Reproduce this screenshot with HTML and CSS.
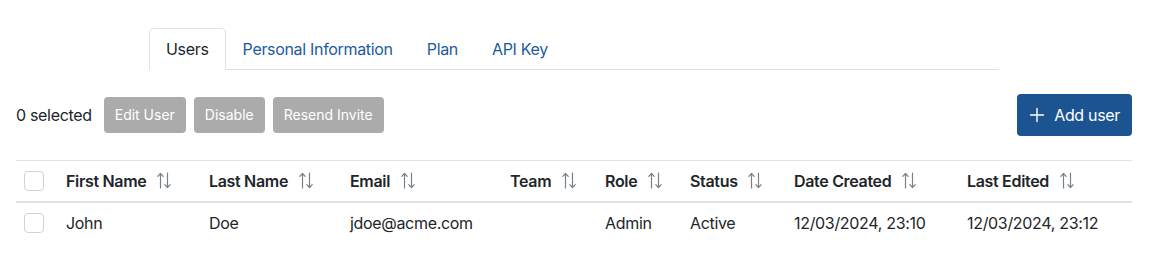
FILE: index.html
```html
<!DOCTYPE html>
<html lang="en">
<head>
  <meta charset="UTF-8">
  <meta name="viewport" content="width=device-width, initial-scale=1">
  <title>Users</title>
  <link rel="stylesheet" href="styles.css">
</head>
<body>
  <div class="page">
    <!-- Account tabs -->
    <ul class="tabs">
      <li class="tab active"><a href="#">Users</a></li>
      <li class="tab"><a href="#">Personal Information</a></li>
      <li class="tab"><a href="#">Plan</a></li>
      <li class="tab"><a href="#">API Key</a></li>
    </ul>

    <!-- Bulk actions -->
    <div class="toolbar">
      <div class="bulk">
        <span class="selected-count">0 selected</span>
        <button class="bulk-btn" disabled>Edit User</button>
        <button class="bulk-btn" disabled>Disable</button>
        <button class="bulk-btn" disabled>Resend Invite</button>
      </div>
      <button class="add-btn">
        <svg class="plus" width="16" height="16" viewBox="0 0 16 16" fill="none" stroke="currentColor" stroke-width="1.4" stroke-linecap="round">
          <path d="M8 1.5v13M1.5 8h13"/>
        </svg>
        Add user
      </button>
    </div>

    <table class="user-table">
      <colgroup>
        <col style="width:42px">
        <col style="width:143px">
        <col style="width:141px">
        <col style="width:160px">
        <col style="width:95px">
        <col style="width:85px">
        <col style="width:104px">
        <col style="width:173px">
        <col style="width:173px">
      </colgroup>
      <thead>
        <tr>
          <th><span class="check"></span></th>
          <th>First Name <span class="sort"></span></th>
          <th>Last Name <span class="sort"></span></th>
          <th>Email <span class="sort"></span></th>
          <th>Team <span class="sort"></span></th>
          <th>Role <span class="sort"></span></th>
          <th>Status <span class="sort"></span></th>
          <th>Date Created <span class="sort"></span></th>
          <th>Last Edited <span class="sort"></span></th>
        </tr>
      </thead>
      <tbody id="rows"></tbody>
    </table>
  </div>

  <script>
    // Sort icon: up arrow on the left, down arrow on the right.
    const sortIcon = '<svg width="16" height="17" viewBox="0 0 16 17" fill="none" stroke="currentColor" stroke-width="1.2" stroke-linecap="round" stroke-linejoin="round">' +
      '<path d="M4.5 16V1.5M1.8 4.3L4.5 1.5l2.7 2.8"/>' +
      '<path d="M11.5 1v14.5M8.8 12.7l2.7 2.8 2.7-2.8"/></svg>';
    document.querySelectorAll('.sort').forEach(function(el) {
      el.innerHTML = sortIcon;
    });

    const users = [
      { first: 'John', last: 'Doe', email: 'jdoe@acme.com', team: '', role: 'Admin', status: 'Active',
        created: '12/03/2024, 23:10', edited: '12/03/2024, 23:12' }
    ];
    const tbody = document.getElementById('rows');
    users.forEach(function(u) {
      let tr = document.createElement('tr');
      tr.innerHTML = '<td><span class="check"></span></td>' +
        '<td>' + u.first + '</td><td>' + u.last + '</td><td>' + u.email + '</td>' +
        '<td>' + u.team + '</td><td>' + u.role + '</td><td>' + u.status + '</td>' +
        '<td>' + u.created + '</td><td>' + u.edited + '</td>';
      tbody.appendChild(tr);
    });
  </script>
</body>
</html>
```

FILE: styles.css
```css
body {
  margin: 0;
  font-family: Inter, "Noto Sans", Arial, sans-serif;
  font-size: 16px;
  letter-spacing: -0.02em;
  color: #212529;
  background: #fff;
}
.page {
  padding: 28px 43px 0 16px;
}
.tabs {
  list-style: none;
  margin: 0 0 0 133px;
  padding: 0;
  width: 850px;
  display: flex;
  border-bottom: 1px solid #dee2e6;
}
.tab {
  margin-bottom: -1px;
}
.tab a {
  display: block;
  padding: 8px 16px;
  line-height: 24px;
  color: #1d5a9e;
  text-decoration: none;
  border: 1px solid transparent;
  border-radius: 5px 5px 0 0;
}
.tab.active a {
  color: #212529;
  border-color: #dee2e6 #dee2e6 #fff;
  background: #fff;
}
.toolbar {
  display: flex;
  justify-content: space-between;
  align-items: center;
  margin: 24px 0;
}
.bulk {
  display: flex;
  align-items: center;
  gap: 8px;
}
.selected-count {
  margin-right: 4px;
}
.bulk-btn {
  font-family: inherit;
  font-size: 14px;
  line-height: 20px;
  padding: 8px 11px;
  border: none;
  border-radius: 4px;
  background: #ababab;
  color: #fff;
}
.add-btn {
  display: flex;
  align-items: center;
  gap: 9px;
  font-family: inherit;
  font-size: 16px;
  letter-spacing: inherit;
  line-height: 24px;
  padding: 9px 12px;
  border: none;
  border-radius: 4px;
  background: #1c5492;
  color: #fff;
}
.user-table {
  width: 1116px;
  table-layout: fixed;
  border-collapse: collapse;
  border-top: 1px solid #dee2e6;
}
.user-table th,
.user-table td {
  text-align: left;
  padding: 8px;
  line-height: 24px;
  white-space: nowrap;
}
.user-table th {
  font-weight: 600;
  border-bottom: 2px solid #dee2e6;
}
.check {
  display: inline-block;
  width: 18px;
  height: 18px;
  border: 1px solid #ced4da;
  border-radius: 4px;
  vertical-align: middle;
  position: relative;
  top: -2px;
}
.sort {
  display: inline-block;
  color: #7a8088;
  margin-left: 6px;
  vertical-align: middle;
  height: 17px;
  position: relative;
  top: -2px;
}
.sort svg {
  display: block;
}
```
